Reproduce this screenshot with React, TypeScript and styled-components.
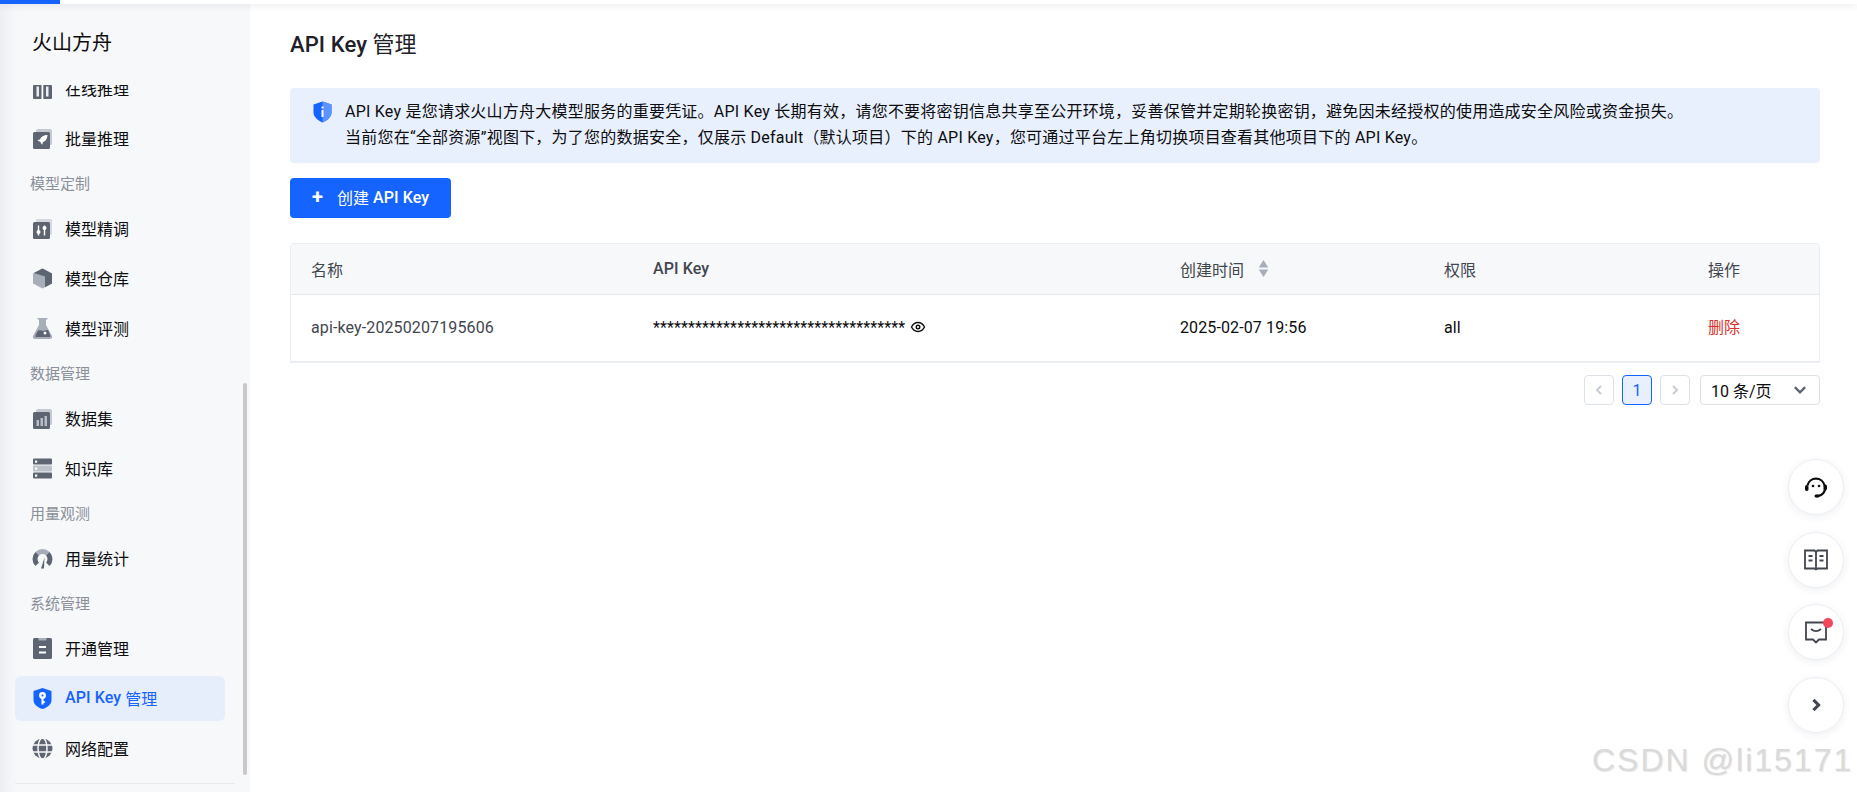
import React from 'react';
import styled, { createGlobalStyle } from 'styled-components';

const GlobalStyle = createGlobalStyle`
    html, body {
        margin: 0;
        padding: 0;
        background: #fff;
        font-family: Roboto, "Noto Sans CJK SC", sans-serif;
        color: #0c0d0e;
    }
    * { box-sizing: border-box; }
`;

const ICON_GRAY = '#5d6472';
const ICON_LIGHT = '#a7adb9';

const InferIcon = () => (
    <svg width="21" height="21" viewBox="0 0 21 21">
        <rect x="1" y="7" width="19" height="14" rx="1" fill={ICON_GRAY} />
        <rect x="4.500" y="8.500" width="2.500" height="10" fill="#eceef1" />
        <rect x="9.500" y="7" width="1.800" height="14" fill="#fff" />
        <rect x="14" y="8.500" width="2.500" height="10" fill="#eceef1" />
    </svg>
);

const RocketIcon = () => (
    <svg width="21" height="21" viewBox="0 0 21 21">
        <rect x="4" y="1" width="16" height="16" rx="1.500" fill="#c6cad2" />
        <rect x="1" y="4" width="17" height="17" rx="1.500" fill={ICON_GRAY} />
        <path d="M14.500 7c-3.500.2-5.500 2-6.500 4.500l-2.500.5 1.200 1.200 1 .4 1 1 .4 1 1.200 1.200.5-2.500c2.500-1 4.300-3 4.700-7.300z" fill="#fff" />
    </svg>
);

const TuneIcon = () => (
    <svg width="21" height="21" viewBox="0 0 21 21">
        <rect x="4" y="1" width="16" height="16" rx="1.500" fill="#d5d8de" />
        <rect x="1" y="4" width="17" height="17" rx="1.500" fill={ICON_GRAY} />
        <path d="M6.500 7.500v10M12.500 7.500v10" stroke="#fff" strokeWidth="1.400" />
        <circle cx="6.500" cy="14" r="2" fill="#fff" />
        <circle cx="12.500" cy="10" r="2" fill="#fff" />
    </svg>
);

const CubeIcon = () => (
    <svg width="21" height="21" viewBox="0 0 21 21">
        <path d="M10.500 0.500L20 5.500v10l-9.500 5L1 15.500v-10z" fill={ICON_LIGHT} />
        <path d="M10.500 0.500L20 5.500v10l-7 3.700V8.500L1.800 5z" fill={ICON_GRAY} />
    </svg>
);

const FlaskIcon = () => (
    <svg width="21" height="21" viewBox="0 0 21 21">
        <path d="M5.500 0h10v1.600h-1.500v5.400L20 18c.6 1.600-.3 3-2 3H3c-1.700 0-2.600-1.400-2-3L7 7V1.600H5.500z" fill={ICON_LIGHT} />
        <path d="M3.500 17.500c1.500-3 2-4.500 3-5 2-.8 3.500 1 5.500.2 1.500-.6 3-1 4.200-.4l2 5.200c.3 1-.2 1.500-1 1.500H4.500c-1 0-1.400-.7-1-1.500z" fill={ICON_GRAY} />
        <circle cx="13" cy="15" r="1.500" fill="#fff" />
    </svg>
);

const DatasetIcon = () => (
    <svg width="21" height="21" viewBox="0 0 21 21">
        <rect x="4" y="1" width="16" height="16" rx="1.500" fill="#c6cad2" />
        <rect x="1" y="4" width="17" height="17" rx="1.500" fill={ICON_GRAY} />
        <rect x="4.500" y="12" width="2.500" height="6" fill="#b9bdc6" />
        <rect x="8.500" y="10" width="2.500" height="8" fill="#b9bdc6" />
        <rect x="12.500" y="8" width="2.500" height="10" fill="#b9bdc6" />
    </svg>
);

const ServerIcon = () => (
    <svg width="21" height="21" viewBox="0 0 21 21">
        <rect x="1" y="0.500" width="19" height="6" rx="1" fill={ICON_GRAY} />
        <rect x="1" y="7.500" width="19" height="6" rx="1" fill="#bcc1ca" />
        <rect x="1" y="14.500" width="19" height="6" rx="1" fill={ICON_GRAY} />
        <rect x="3" y="2.500" width="2.200" height="2.200" fill="#fff" />
        <rect x="3" y="9.500" width="2.200" height="2.200" fill="#fff" />
        <rect x="3" y="16.500" width="2.200" height="2.200" fill="#fff" />
    </svg>
);

const GaugeIcon = () => (
    <svg width="21" height="21" viewBox="0 0 21 21">
        <path d="M5.200 5.700A7.500 7.500 0 0 1 15.800 5.700" fill="none" stroke={ICON_LIGHT} strokeWidth="5" />
        <path d="M5.200 5.700A7.500 7.500 0 0 0 5.200 16.300" fill="none" stroke={ICON_GRAY} strokeWidth="5" />
        <path d="M15.800 5.700A7.500 7.500 0 0 1 15.800 16.300" fill="none" stroke={ICON_GRAY} strokeWidth="5" />
        <path d="M9 20.500L12.500 9.500L12 20.500z" fill={ICON_GRAY} />
    </svg>
);

const ClipboardIcon = () => (
    <svg width="21" height="21" viewBox="0 0 21 21">
        <rect x="1" y="0" width="19" height="21" rx="1.500" fill={ICON_GRAY} />
        <rect x="6.500" y="0" width="8" height="2.500" fill={ICON_LIGHT} />
        <rect x="7" y="8" width="7" height="2" fill="#fff" />
        <rect x="7" y="13.500" width="7" height="2" fill="#fff" />
    </svg>
);

const KeyShieldIcon = () => (
    <svg width="21" height="21" viewBox="0 0 21 21">
        <path d="M10.500 0L19.500 3v9c0 4.500-4.500 7.800-9 9-4.500-1.200-9-4.500-9-9V3z" fill="#1664ff" />
        <circle cx="10.500" cy="7.500" r="3.400" fill="#fff" />
        <circle cx="10.500" cy="7.500" r="1.100" fill="#1664ff" />
        <path d="M10.500 10v6.500M10.500 14h2.200" stroke="#fff" strokeWidth="2" fill="none" />
    </svg>
);

const GlobeIcon = () => (
    <svg width="21" height="21" viewBox="0 0 21 21">
        <circle cx="10.500" cy="10.500" r="10" fill={ICON_GRAY} />
        <path d="M0 7h21M0 14h21" stroke="#f7f8fa" strokeWidth="1.500" />
        <ellipse cx="10.500" cy="10.500" rx="4.500" ry="10.500" fill="none" stroke="#f7f8fa" strokeWidth="1.500" />
    </svg>
);

const InfoShield = () => (
    <svg width="19" height="22" viewBox="0 0 19 22">
        <path d="M9.500 0.500L18.500 3.500v8c0 4.500-4.500 8-9 10-4.500-2-9-5.500-9-10v-8z" fill="#1664ff" />
        <path d="M9.500 0.500L18.500 3.500v8c0 4.500-4.500 8-9 10z" fill="#5c93ff" />
        <rect x="8.500" y="9" width="2" height="7" fill="#fff" />
        <rect x="8.500" y="5.500" width="2" height="2" fill="#fff" />
    </svg>
);

const EyeIcon = () => (
    <svg width="16" height="16" viewBox="0 0 16 16" fill="none" stroke="#0c0d0e" strokeWidth="1.400">
        <path d="M1.500 8C3 5 5.300 3.500 8 3.500S13 5 14.500 8C13 11 10.700 12.500 8 12.500S3 11 1.500 8z" />
        <circle cx="8" cy="8" r="1.800" />
    </svg>
);

const Chevron = ({ dir, color, size = 14, weight = 2 }: { dir: 'left' | 'right' | 'down'; color: string; size?: number; weight?: number }) => {
    const d = { left: 'M9 3L5 7l4 4', right: 'M5 3l4 4-4 4', down: 'M2.500 4.500L7 9l4.500-4.500' }[dir];
    return (
        <svg width={size} height={size} viewBox="0 0 14 14" fill="none" stroke={color} strokeWidth={weight}>
            <path d={d} />
        </svg>
    );
};

const HeadsetIcon = () => (
    <svg width="26" height="26" viewBox="0 0 26 26" fill="none" stroke="#0c0d0e" strokeWidth="2.200">
        <path d="M4.500 11.500a8.700 8.700 0 0 1 17 0" />
        <path d="M22 15c-.5 3.500-3 6.200-6.500 6.800" />
        <rect x="2" y="11" width="3.500" height="6" rx="1.700" fill="#0c0d0e" stroke="none" />
        <rect x="20.500" y="10.500" width="3.500" height="6" rx="1.700" fill="#0c0d0e" stroke="none" />
        <ellipse cx="14" cy="22" rx="2.600" ry="1.800" fill="#0c0d0e" stroke="none" />
        <circle cx="10" cy="12" r="1.300" fill="#0c0d0e" stroke="none" />
        <circle cx="16" cy="12" r="1.300" fill="#0c0d0e" stroke="none" />
    </svg>
);

const BookIcon = () => (
    <svg width="24" height="24" viewBox="0 0 24 24" fill="none" stroke="#42464e" strokeWidth="1.800">
        <path d="M12 21.500l-1.500-1H1V2.500h9.500L12 4l1.500-1.500H23v18h-9.500z" />
        <path d="M12 4v17M4.500 8h4M4.500 12.500h4M15.500 8h4M15.500 12.500h4" />
    </svg>
);

const MessageIcon = () => (
    <svg width="24" height="24" viewBox="0 0 24 24" fill="none" stroke="#42464e" strokeWidth="1.800">
        <path d="M2 2.500h20v17h-7l-3 3-3-3H2z" />
        <path d="M7 9c3 2.500 7 2.500 10 0" />
    </svg>
);

const App = () => (
    <Page>
        <GlobalStyle />
        <TopBar>
            <Progress />
        </TopBar>
        <Body>
            <Sidebar>
                <Brand>火山方舟</Brand>
                <NavScroll>
                    <ScrollThumb />
                    <NavList>
                        <NavItem><IconSlot><InferIcon /></IconSlot>在线推理</NavItem>
                        <NavItem><IconSlot><RocketIcon /></IconSlot>批量推理</NavItem>
                        <NavGroup>模型定制</NavGroup>
                        <NavItem><IconSlot><TuneIcon /></IconSlot>模型精调</NavItem>
                        <NavItem><IconSlot><CubeIcon /></IconSlot>模型仓库</NavItem>
                        <NavItem><IconSlot><FlaskIcon /></IconSlot>模型评测</NavItem>
                        <NavGroup>数据管理</NavGroup>
                        <NavItem><IconSlot><DatasetIcon /></IconSlot>数据集</NavItem>
                        <NavItem><IconSlot><ServerIcon /></IconSlot>知识库</NavItem>
                        <NavGroup>用量观测</NavGroup>
                        <NavItem><IconSlot><GaugeIcon /></IconSlot>用量统计</NavItem>
                        <NavGroup>系统管理</NavGroup>
                        <NavItem><IconSlot><ClipboardIcon /></IconSlot>开通管理</NavItem>
                        <NavItem $active><IconSlot><KeyShieldIcon /></IconSlot><Latin>API Key</Latin>&nbsp;管理</NavItem>
                        <NavItem><IconSlot><GlobeIcon /></IconSlot>网络配置</NavItem>
                    </NavList>
                </NavScroll>
                <SideFooter />
            </Sidebar>
            <Main>
                <Title><Latin>API Key</Latin> 管理</Title>
                <Alert>
                    <AlertIcon><InfoShield /></AlertIcon>
                    <AlertText>
                        <AlertLine>API Key 是您请求火山方舟大模型服务的重要凭证。API Key 长期有效，请您不要将密钥信息共享至公开环境，妥善保管并定期轮换密钥，避免因未经授权的使用造成安全风险或资金损失。</AlertLine>
                        <AlertLine>当前您在“全部资源”视图下，为了您的数据安全，仅展示 Default（默认项目）下的 API Key，您可通过平台左上角切换项目查看其他项目下的 API Key。</AlertLine>
                    </AlertText>
                </Alert>
                <PrimaryButton>
                    <PlusMark>+</PlusMark>
                    创建&nbsp;<Latin>API Key</Latin>
                </PrimaryButton>
                <Table>
                    <HeadRow>
                        <HeadCell>名称</HeadCell>
                        <HeadCell><Latin>API Key</Latin></HeadCell>
                        <HeadCell>
                            创建时间
                            <SortMark>
                                <svg width="11" height="17" viewBox="0 0 10 16" fill="#a7adb9">
                                    <path d="M5 0l4.500 7h-9zM5 16L.5 9h9z" />
                                </svg>
                            </SortMark>
                        </HeadCell>
                        <HeadCell>权限</HeadCell>
                        <HeadCell>操作</HeadCell>
                    </HeadRow>
                    <BodyRow>
                        <BodyCell $muted>api-key-20250207195606</BodyCell>
                        <BodyCell>
                            ************************************
                            <EyeSlot><EyeIcon /></EyeSlot>
                        </BodyCell>
                        <BodyCell>2025-02-07 19:56</BodyCell>
                        <BodyCell>all</BodyCell>
                        <BodyCell $danger>删除</BodyCell>
                    </BodyRow>
                </Table>
                <Pager>
                    <PageButton $disabled><Chevron dir="left" color="#c7ccd6" /></PageButton>
                    <PageButton $current>1</PageButton>
                    <PageButton $disabled><Chevron dir="right" color="#c7ccd6" /></PageButton>
                    <PageSize>
                        10 条/页
                        <Chevron dir="down" color="#5d6472" size={16} />
                    </PageSize>
                </Pager>
            </Main>
        </Body>
        <FloatDock>
            <FloatButton><HeadsetIcon /></FloatButton>
            <FloatButton><BookIcon /></FloatButton>
            <FloatButton><MessageIcon /><RedDot /></FloatButton>
            <FloatButton><Chevron dir="right" color="#42464e" size={18} weight={2.4} /></FloatButton>
        </FloatDock>
        <Watermark>CSDN @li15171</Watermark>
    </Page>
);

export default App;

const Page = styled.div`
    position: relative;
    width: 1857px;
    height: 792px;
    overflow: hidden;
    background: #fff;
`;

const TopBar = styled.div`
    position: relative;
    z-index: 2;
    height: 4px;
    background: #fff;
    box-shadow: 0 2px 6px rgba(30, 40, 60, 0.1);
`;

const Progress = styled.div`
    width: 60px;
    height: 4px;
    background: #1664ff;
`;

const Body = styled.div`
    display: flex;
    height: 788px;
`;

const Sidebar = styled.aside`
    display: flex;
    flex-direction: column;
    width: 250px;
    flex-shrink: 0;
    background: linear-gradient(to right, #eceef2 0, #f4f5f8 10px, #f7f8fa 18px);
`;

const Brand = styled.div`
    height: 81px;
    padding: 25px 0 0 32px;
    font-size: 20px;
    line-height: 28px;
    flex-shrink: 0;
`;

const NavScroll = styled.div`
    position: relative;
    flex: 1;
    overflow: hidden;
`;

const ScrollThumb = styled.div`
    position: absolute;
    right: 3px;
    top: 298px;
    width: 4px;
    height: 392px;
    border-radius: 2px;
    background: #c8c8c8;
`;

const NavList = styled.div`
    display: flex;
    flex-direction: column;
    margin-top: -19px;
    padding: 0 25px 0 15px;
`;

const NavItem = styled.div<{ $active?: boolean }>`
    display: flex;
    align-items: center;
    height: 45px;
    margin-bottom: 5px;
    padding: 0 0 2px 17px;
    border-radius: 6px;
    font-size: 16px;
    background: ${(p) => (p.$active ? '#e6edfb' : 'transparent')};
    color: ${(p) => (p.$active ? '#1664ff' : '#0c0d0e')};
`;

const Latin = styled.span`
    font-weight: 500;
    letter-spacing: 0.1px;
`;

const IconSlot = styled.span`
    display: inline-flex;
    width: 21px;
    height: 21px;
    margin: 2px 12px 0 0;
`;

const NavGroup = styled.div`
    height: 45px;
    margin-top: -5px;
    padding: 11.5px 0 0 15px;
    font-size: 15px;
    line-height: 22px;
    color: #8a8f99;
`;

const SideFooter = styled.div`
    height: 9px;
    margin: 0 15px;
    border-top: 1px solid #e9ebef;
    flex-shrink: 0;
`;

const Main = styled.main`
    flex: 1;
    min-width: 0;
    padding: 0 37px 0 40px;
`;

const Title = styled.h1`
    margin: 0;
    padding-top: 26px;
    height: 84px;
    font-size: 22px;
    line-height: 30px;
    font-weight: 400;
    color: #1d2129;
`;

const Alert = styled.div`
    display: flex;
    height: 75px;
    padding: 11px 0 0 23px;
    border-radius: 4px;
    background: #e8effd;
`;

const AlertIcon = styled.span`
    display: inline-flex;
    width: 19px;
    height: 22px;
    margin: 2px 13px 0 0;
`;

const AlertText = styled.div`
    font-size: 16px;
    line-height: 26px;
    color: #0c0d0e;
`;

const AlertLine = styled.div`
    letter-spacing: 0.23px;
    white-space: nowrap;
`;

const PrimaryButton = styled.button`
    display: flex;
    align-items: center;
    width: 161px;
    height: 40px;
    margin-top: 15px;
    padding: 0 0 2px 22px;
    border: none;
    border-radius: 4px;
    background: #1664ff;
    color: #fff;
    font-family: inherit;
    font-size: 16px;
    font-weight: 400;
`;

const PlusMark = styled.span`
    width: 25px;
    font-size: 20px;
    font-weight: 700;
    line-height: 20px;
    text-align: left;
`;

const Table = styled.div`
    margin-top: 25px;
    border: 1px solid #eaedf1;
    border-bottom-width: 2px;
    border-radius: 4px 4px 0 0;
`;

const HeadRow = styled.div`
    display: grid;
    grid-template-columns: 342px 527px 264px 264px 1fr;
    height: 51px;
    padding-bottom: 1px;
    background: #f6f8fa;
    border-bottom: 1px solid #e6e9ee;
`;

const HeadCell = styled.div`
    display: flex;
    align-items: center;
    padding-left: 20px;
    font-size: 16px;
    color: #42464e;
`;

const SortMark = styled.span`
    display: inline-flex;
    margin-left: 14px;
`;

const BodyRow = styled.div`
    display: grid;
    grid-template-columns: 342px 527px 264px 264px 1fr;
    height: 66px;
`;

const BodyCell = styled.div<{ $muted?: boolean; $danger?: boolean }>`
    display: flex;
    align-items: center;
    padding-left: 20px;
    padding-bottom: ${(p) => (p.$danger ? '5px' : '2px')};
    font-size: 16px;
    letter-spacing: ${(p) => (p.$danger ? '0' : '0.12px')};
    color: ${(p) => (p.$danger ? '#d7312a' : p.$muted ? '#42464e' : '#0c0d0e')};
`;

const EyeSlot = styled.span`
    display: inline-flex;
    margin-left: 5px;
`;

const Pager = styled.div`
    display: flex;
    justify-content: flex-end;
    align-items: center;
    gap: 8px;
    margin-top: 12px;
`;

const PageButton = styled.div<{ $current?: boolean; $disabled?: boolean }>`
    display: flex;
    align-items: center;
    justify-content: center;
    width: 30px;
    height: 30px;
    border-radius: 4px;
    border: 1px solid ${(p) => (p.$current ? '#1664ff' : '#dde2e9')};
    background: ${(p) => (p.$current ? '#e8effd' : '#fff')};
    color: #1664ff;
    font-size: 16px;
`;

const PageSize = styled.div`
    display: flex;
    align-items: center;
    justify-content: space-between;
    width: 120px;
    height: 30px;
    margin-left: 2px;
    padding: 0 11px 0 10px;
    border-radius: 4px;
    border: 1px solid #dde2e9;
    font-size: 16px;
`;

const FloatDock = styled.div`
    position: absolute;
    top: 459px;
    left: 1788px;
    display: flex;
    flex-direction: column;
    gap: 16.5px;
`;

const FloatButton = styled.div`
    position: relative;
    display: flex;
    align-items: center;
    justify-content: center;
    width: 56px;
    height: 56px;
    border-radius: 50%;
    background: #fff;
    border: 1px solid #eceef4;
    box-shadow: 0 2px 8px rgba(40, 50, 90, 0.08);
`;

const RedDot = styled.span`
    position: absolute;
    top: 13px;
    right: 10px;
    width: 10px;
    height: 10px;
    border-radius: 50%;
    background: #f5475b;
`;

const Watermark = styled.div`
    position: absolute;
    left: 1592px;
    top: 740px;
    font-family: "Liberation Sans", sans-serif;
    font-size: 32px;
    line-height: 40px;
    letter-spacing: 2px;
    color: #dadada;
    text-shadow: 1px 1px 1px rgba(120, 120, 120, 0.18);
    white-space: nowrap;
`;
